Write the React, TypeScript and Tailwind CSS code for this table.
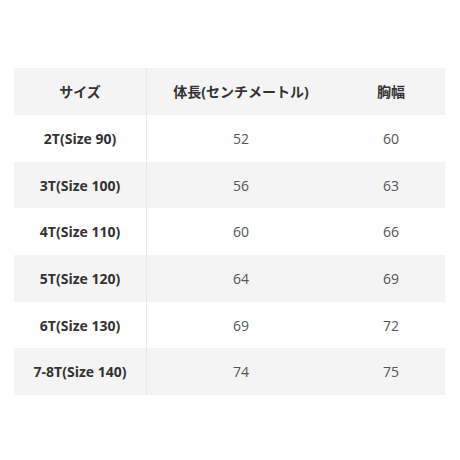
import React from 'react';

const rows = [
  ['2T(Size 90)', '52', '60'],
  ['3T(Size 100)', '56', '63'],
  ['4T(Size 110)', '60', '66'],
  ['5T(Size 120)', '64', '69'],
  ['6T(Size 130)', '69', '72'],
  ['7-8T(Size 140)', '74', '75'],
];

const App = () => {
  return (
    <div
      className="w-[460px] h-[460px] bg-white pt-[68px] pl-[14px]"
      style={{ fontFamily: '"Open Sans", "Noto Sans CJK JP", sans-serif' }}
    >
      <div className="w-[431px] flex flex-col text-[14px]">
        {/* Header */}
        <div className="flex h-[47px] bg-[#f4f4f4] font-bold text-[#333]">
          <div className="w-[133px] flex items-center justify-center border-r border-[#e8e8e8]">サイズ</div>
          <div className="w-[188px] flex items-center justify-center">体長(センチメートル)</div>
          <div className="flex-1 flex items-center justify-center pl-[2px]">胸幅</div>
        </div>
        {rows.map((r, i) => (
          <div key={r[0]} className={`flex h-[46.7px] ${i % 2 === 0 ? 'bg-white' : 'bg-[#f4f4f4]'}`}>
            <div className="w-[133px] flex items-center justify-center border-r border-[#e8e8e8] font-bold text-[#333]">{r[0]}</div>
            <div className="w-[188px] flex items-center justify-center text-[#555]">{r[1]}</div>
            <div className="flex-1 flex items-center justify-center text-[#555] pl-[2px]">{r[2]}</div>
          </div>
        ))}
      </div>
    </div>
  );
};

export default App;
